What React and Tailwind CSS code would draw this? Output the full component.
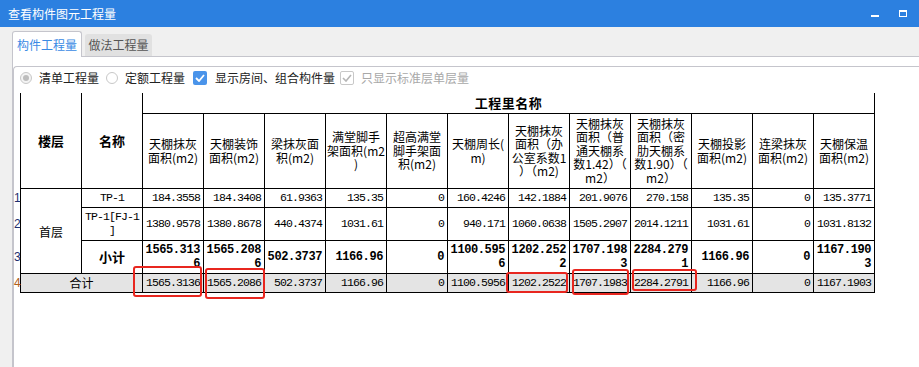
import React from 'react';

const headers = [
  ['天棚抹灰', '面积(m2)'],
  ['天棚装饰', '面积(m2)'],
  ['梁抹灰面', '积(m2)'],
  ['满堂脚手', '架面积(m2', ')'],
  ['超高满堂', '脚手架面', '积(m2)'],
  ['天棚周长(', 'm)'],
  ['天棚抹灰', '面积（办', '公室系数1', '）（m2)'],
  ['天棚抹灰', '面积（普', '通天棚系', '数1.42）（', 'm2）'],
  ['天棚抹灰', '面积（密', '肋天棚系', '数1.90）（', 'm2）'],
  ['天棚投影', '面积(m2)'],
  ['连梁抹灰', '面积(m2)'],
  ['天棚保温', '面积(m2)'],
];

const row1 = ['184.3558', '184.3408', '61.9363', '135.35', '0', '160.4246', '142.1884', '201.9076', '270.158', '135.35', '0', '135.3771'];
const row2 = ['1380.9578', '1380.8678', '440.4374', '1031.61', '0', '940.171', '1060.0638', '1505.2907', '2014.1211', '1031.61', '0', '1031.8132'];
// subtotal values wrap inside the narrow cells, so lines are given as they appear
const subtotal = [
  ['1565.313', '6'], ['1565.208', '6'], ['502.3737'], ['1166.96'], ['0'], ['1100.595', '6'],
  ['1202.252', '2'], ['1707.198', '3'], ['2284.279', '1'], ['1166.96'], ['0'], ['1167.190', '3'],
];
const total = ['1565.3136', '1565.2086', '502.3737', '1166.96', '0', '1100.5956', '1202.2522', '1707.1983', '2284.2791', '1166.96', '0', '1167.1903'];

const marks = [
  { left: 133, top: 266, w: 69, h: 31 },
  { left: 205, top: 268, w: 60, h: 31 },
  { left: 506, top: 272, w: 62, h: 21 },
  { left: 572, top: 269, w: 57, h: 26 },
  { left: 632, top: 269, w: 65, h: 22 },
];

const RowNum = ({ n, color = 'text-[#1e2f6e]' }) => (
  <td className={`p-0 text-[12px] align-middle font-['Liberation_Sans',sans-serif] ${color}`}>{n}</td>
);

const NumCell = ({ value }) => (
  <td className="border-r border-b border-black p-0 pr-[3px] text-right align-middle whitespace-nowrap text-[11.5px] tracking-[-0.9px] font-['Liberation_Mono',monospace]">
    {value}
  </td>
);

const BoldCell = ({ lines }) => (
  <td className="border-r border-b border-black p-0 pr-[3px] text-right align-middle whitespace-nowrap text-[12px] leading-[14px] font-bold tracking-[-0.4px] font-['Liberation_Mono',monospace]">
    {lines.map((l, i) => (
      <div key={i}>{l}</div>
    ))}
  </td>
);

export default function App() {
  return (
    <div className="relative w-[919px] h-[367px] overflow-hidden bg-[#f0f0f0] font-['Noto_Sans_CJK_SC',sans-serif]">
      {/* title bar */}
      <div className="h-[27px] bg-[#2c80e0] flex items-center pl-[8px] text-white text-[12px]">
        <span>查看构件图元工程量</span>
        <div className="ml-auto flex items-center gap-[20px] pr-[12px]">
          <span className="block w-[8px] h-[2px] bg-white mt-[5px]" />
          <span className="block w-[8px] h-[7px] border border-white border-t-2" />
        </div>
      </div>

      <div className="flex h-[340px]">
        <div className="w-[12px] bg-[#f0f0f0]" />
        <div className="flex-1 flex flex-col">
          {/* tabs */}
          <div className="h-[30px] flex items-end border-b border-[#c5c5cc]">
            <div className="relative z-10 -mb-px h-[26px] w-[70px] flex items-center justify-center bg-white border border-b-0 border-[#c5c5cc] rounded-t-[3px] text-[12px] text-[#3a8ae4]">
              构件工程量
            </div>
            <div className="ml-[3px] h-[22px] w-[67px] flex items-center justify-center bg-[#e1e1e1] rounded-t-[3px] text-[12px] text-[#555]">
              做法工程量
            </div>
          </div>

          <div className="flex-1 bg-white border-l border-[#c5c5cc]">
            <div className="mt-[9px] h-full border-t border-l border-[#c5c5cc] rounded-tl-[4px]">
              {/* options */}
              <div className="h-[22px] flex items-center pl-[6px] text-[12px] text-[#222]">
                <span className="w-[12px] h-[12px] rounded-full border border-[#c8c8c8] bg-[#f4f4f4] flex items-center justify-center">
                  <span className="w-[6px] h-[6px] rounded-full bg-[#bdbdbd]" />
                </span>
                <span className="ml-[7px]">清单工程量</span>
                <span className="ml-[7px] w-[12px] h-[12px] rounded-full border border-[#c8c8c8] bg-white" />
                <span className="ml-[7px]">定额工程量</span>
                <span className="ml-[8px] w-[14px] h-[14px] rounded-[2px] bg-[#4a94ea] flex items-center justify-center">
                  <svg width="10" height="8" viewBox="0 0 10 8">
                    <path d="M1 4 L4 7 L9 1" fill="none" stroke="white" strokeWidth="1.8" />
                  </svg>
                </span>
                <span className="ml-[8px]">显示房间、组合构件量</span>
                <span className="ml-[5px] w-[14px] h-[14px] rounded-[2px] border border-[#c8c8c8] bg-white flex items-center justify-center">
                  <svg width="10" height="8" viewBox="0 0 10 8">
                    <path d="M1 4 L4 7 L9 1" fill="none" stroke="#b5b5b5" strokeWidth="1.6" />
                  </svg>
                </span>
                <span className="ml-[7px] text-[#a8a8a8]">只显示标准层单层量</span>
              </div>

              {/* table */}
              <table className="mt-[4px] w-[861px] border-separate border-spacing-0 table-fixed text-black text-[12px]">
                <colgroup>
                  <col className="w-[6px]" />
                  <col className="w-[62px]" />
                  {Array.from({ length: 13 }, (_, i) => (
                    <col key={i} className="w-[61px]" />
                  ))}
                </colgroup>
                <tbody>
                  <tr className="h-[19px]">
                    <td rowSpan={2} className="p-0" />
                    <td rowSpan={2} className="border-l border-r border-b border-black p-0 text-center align-middle font-bold text-[13px]">
                      楼层
                    </td>
                    <td rowSpan={2} className="border-r border-b border-black p-0 text-center align-middle font-bold text-[13px]">
                      名称
                    </td>
                    <td colSpan={12} className="border-r border-b border-black p-0 text-center align-middle font-bold text-[13px] tracking-[0.5px]">
                      工程里名称
                    </td>
                  </tr>
                  <tr className="h-[75px]">
                    {headers.map((lines, i) => (
                      <td key={i} className="border-r border-b border-black p-0 text-center align-middle leading-[13.5px] whitespace-nowrap">
                        {lines.map((l, j) => (
                          <div key={j}>{l}</div>
                        ))}
                      </td>
                    ))}
                  </tr>
                  <tr className="h-[19px]">
                    <RowNum n="1" />
                    <td rowSpan={3} className="border-l border-r border-b border-black p-0 text-center align-middle pt-[3px]">
                      首层
                    </td>
                    <td className="border-r border-b border-black p-0 text-center align-middle text-[11.5px] tracking-[-0.9px] font-['Liberation_Mono',monospace]">
                      TP-1
                    </td>
                    {row1.map((v, i) => (
                      <NumCell key={i} value={v} />
                    ))}
                  </tr>
                  <tr className="h-[33px]">
                    <RowNum n="2" />
                    <td className="border-r border-b border-black p-0 text-center align-middle leading-[14px] text-[11.5px] tracking-[-0.9px] font-['Liberation_Mono',monospace]">
                      <div>TP-1[FJ-1</div>
                      <div>]</div>
                    </td>
                    {row2.map((v, i) => (
                      <NumCell key={i} value={v} />
                    ))}
                  </tr>
                  <tr className="h-[33px]">
                    <RowNum n="3" />
                    <td className="border-r border-b border-black p-0 text-center align-middle font-bold text-[13px]">
                      小计
                    </td>
                    {subtotal.map((lines, i) => (
                      <BoldCell key={i} lines={lines} />
                    ))}
                  </tr>
                  <tr className="h-[19px]">
                    <RowNum n="4" color="text-[#b0601c]" />
                    <td colSpan={2} className="border-l border-r border-b border-black p-0 text-center align-middle bg-[#e4e4e4]">
                      合计
                    </td>
                    {total.map((v, i) => (
                      <td key={i} className="border-r border-b border-black p-0 pr-[3px] text-right align-middle whitespace-nowrap bg-[#e4e4e4] text-[11.5px] tracking-[-0.9px] font-['Liberation_Mono',monospace]">
                        {v}
                      </td>
                    ))}
                  </tr>
                </tbody>
              </table>
            </div>
          </div>
        </div>
      </div>

      {/* red annotation boxes */}
      {marks.map((m, i) => (
        <div
          key={i}
          className="absolute border-2 border-[#e8261f] rounded-[3px] pointer-events-none"
          style={{ left: m.left, top: m.top, width: m.w, height: m.h }}
        />
      ))}
    </div>
  );
}
